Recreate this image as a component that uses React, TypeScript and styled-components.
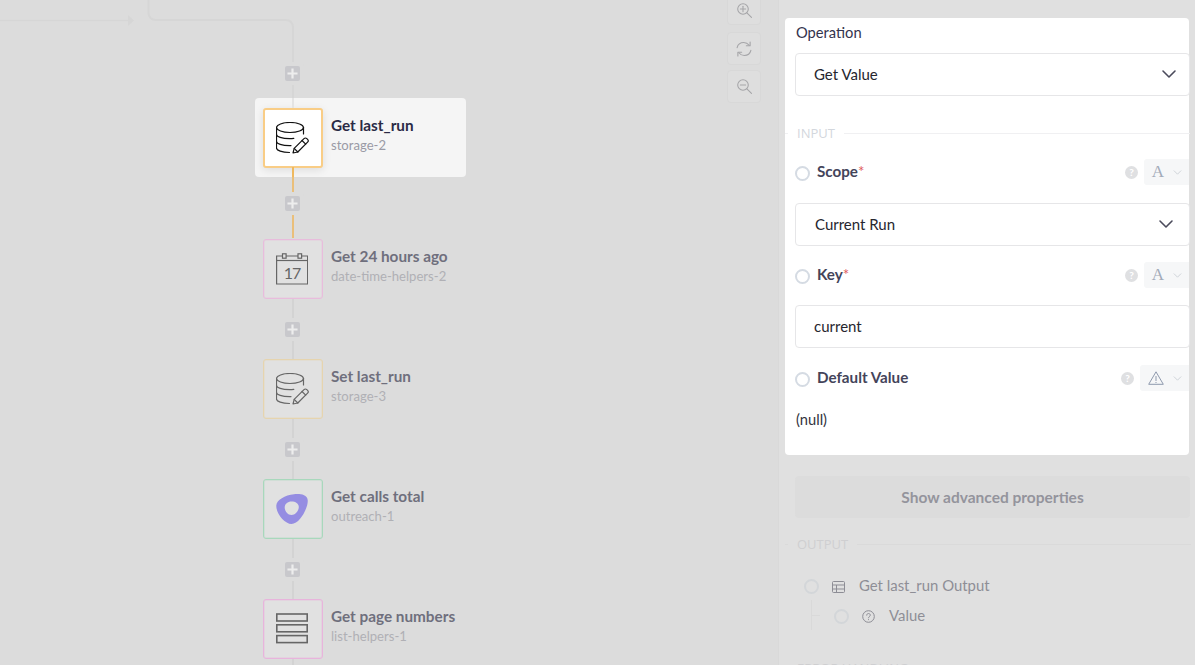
import React from "react";
import styled, { createGlobalStyle } from "styled-components";

const Global = createGlobalStyle`
  html, body { margin: 0; padding: 0; height: 100%; overflow: hidden; background: #dcdcdc; }
  #root { height: 100%; }
  * { box-sizing: border-box; }
`;

const Page = styled.div`
  display: flex;
  width: 1195px;
  height: 665px;
  overflow: hidden;
  font-family: "Lato", "Open Sans", sans-serif;
  background: #dcdcdc;
`;

const Canvas = styled.div`
  position: relative;
  width: 778px;
  flex: none;
  height: 100%;
  overflow: hidden;
`;

const Wires = styled.svg`
  position: absolute;
  inset: 0;
`;

const NodeWrap = styled.div<{ $x: number; $y: number; $selected?: boolean }>`
  position: absolute;
  left: ${(p) => p.$x}px;
  top: ${(p) => p.$y}px;
  width: 211px;
  height: 79px;
  display: flex;
  align-items: center;
  gap: 8px;
  padding-left: 8px;
  border-radius: 4px;
  background: ${(p) => (p.$selected ? "#f5f5f5" : "transparent")};
  ${(p) =>
    p.$selected
      ? `&::after {
    content: "";
    position: absolute;
    left: 37px;
    top: 69px;
    width: 2px;
    height: 10px;
    background: #efb95f;
  }
  &::before {
    content: "";
    position: absolute;
    left: 37px;
    top: 0;
    width: 2px;
    height: 10px;
    background: #e4e4e4;
  }`
      : ""}
`;

const IconBox = styled.div<{ $color: string; $selected?: boolean }>`
  width: 60px;
  height: 60px;
  flex: none;
  display: flex;
  align-items: center;
  justify-content: center;
  padding-right: 2px;
  border: ${(p) => (p.$selected ? 2 : 1)}px solid ${(p) => p.$color};
  border-radius: 3px;
  background: ${(p) => (p.$selected ? "#ffffff" : "#e1e1e1")};
  box-shadow: ${(p) =>
    p.$selected
      ? "0 2px 8px rgba(0,0,0,0.1)"
      : `inset 0 0 0 1px color-mix(in srgb, ${p.$color} 30%, transparent)`};
  color: ${(p) => (p.$selected ? "#111111" : "#666666")};
`;

const NodeText = styled.div`
  display: flex;
  flex-direction: column;
  gap: 3px;
  white-space: nowrap;
  padding-bottom: 5px;
`;

const NodeTitle = styled.div<{ $selected?: boolean }>`
  font-size: 15.3px;
  line-height: 18px;
  font-weight: 700;
  color: ${(p) => (p.$selected ? "#2a2a45" : "#6f6f7d")};
`;

const NodeSub = styled.div<{ $selected?: boolean }>`
  font-size: 13.1px;
  line-height: 17px;
  color: ${(p) => (p.$selected ? "#9a9aa5" : "#b0b0b5")};
`;

const Plus = styled.div<{ $y: number }>`
  position: absolute;
  left: 285px;
  top: ${(p) => p.$y}px;
  width: 15px;
  height: 15px;
  border-radius: 2px;
  background: #c8c8cc;
  box-shadow: 0 0 0 4px #dcdcdc;
  display: flex;
  align-items: center;
  justify-content: center;
`;

const ZoomBtn = styled.div<{ $y: number; $nudge?: number }>`
  position: absolute;
  left: 727px;
  top: ${(p) => p.$y}px;
  width: 34px;
  height: 33px;
  padding-top: ${(p) => p.$nudge ?? 0}px;
  border: 1px solid #d8d8d8;
  border-radius: 4px;
  background: #dedede;
  display: flex;
  align-items: center;
  justify-content: center;
  color: #a5a5a8;
`;

const Panel = styled.div`
  flex: 1;
  height: 100%;
  background: #e0e0e0;
  border-left: 1px solid #d9d9d9;
  padding: 18px 5px 0 6px;
  display: flex;
  flex-direction: column;
  overflow: hidden;
`;

const Card = styled.div`
  background: #ffffff;
  border-radius: 4px;
  height: 437px;
  padding: 5px 0 0 10px;
  margin-right: 1px;
  flex: none;
  display: flex;
  flex-direction: column;
`;

const FieldLabel = styled.div`
  margin-left: 1px;
  font-size: 14.7px;
  line-height: 18px;
  color: #33334d;
`;

const Control = styled.div<{ $pad?: number; $padRight?: number; $top?: number }>`
  height: 43px;
  margin-top: ${(p) => p.$top ?? 0}px;
  margin-right: -1px;
  border: 1px solid #e6e6e8;
  border-radius: 4px;
  padding: 0 ${(p) => p.$padRight ?? 12}px 2px ${(p) => p.$pad ?? 18}px;
  display: flex;
  align-items: center;
  justify-content: space-between;
  font-size: 15px;
  color: #26262e;
`;

const SectionRow = styled.div<{ $top: number; $line: string; $text: string }>`
  display: flex;
  align-items: center;
  gap: 9px;
  margin: ${(p) => p.$top}px -1px 0 -10px;
  font-family: "Open Sans", sans-serif;
  font-size: 13px;
  line-height: 16px;
  color: ${(p) => p.$text};
  white-space: nowrap;
  &::before {
    content: "";
    width: 3px;
    height: 1px;
    background: ${(p) => p.$line};
  }
  &::after {
    content: "";
    flex: 1;
    height: 1px;
    background: ${(p) => p.$line};
  }
`;

const PropRow = styled.div<{ $top: number }>`
  display: flex;
  align-items: center;
  margin-top: ${(p) => p.$top}px;
  height: 26px;
`;

const Radio = styled.span<{ $light?: boolean }>`
  width: 15px;
  height: 15px;
  flex: none;
  margin-top: 2px;
  border-radius: 50%;
  border: 2px solid ${(p) => (p.$light ? "#d3d6d9" : "#d5dbe3")};
`;

const PropName = styled.div`
  margin-left: 7px;
  font-size: 15.2px;
  font-weight: 700;
  color: #44445a;
  flex: 1;
  padding-bottom: 2px;
`;

const Req = styled.span`
  color: #e05a5a;
  font-weight: 400;
`;

const HelpDot = styled.span`
  width: 13px;
  height: 13px;
  border-radius: 50%;
  background: #dfe0e2;
  color: #fff;
  font-size: 10px;
  font-weight: 700;
  line-height: 13px;
  text-align: center;
  margin-right: 6px;
`;

const TypeBox = styled.div`
  height: 26px;
  padding: 0 7px 0 7px;
  background: #f6f7f8;
  border-radius: 3px 0 0 3px;
  display: flex;
  align-items: center;
  gap: 8px;
  color: #a3abb9;
`;

const TypeA = styled.span`
  font-family: "Liberation Serif", serif;
  font-size: 17px;
  width: 14px;
  text-align: center;
`;

const WarnSlot = styled.span`
  display: flex;
  margin: 0 1px;
  color: #8e99ad;
`;

const NullText = styled.div`
  margin: 19px 0 0 1px;
  font-size: 14.7px;
  line-height: 18px;
  color: #33333d;
`;

const AdvancedButton = styled.div`
  margin: 21px 0 0 10px;
  height: 42px;
  flex: none;
  border-radius: 4px;
  background: #dcdcdc;
  display: flex;
  align-items: center;
  justify-content: center;
  font-size: 15.5px;
  font-weight: 700;
  color: #94949c;
`;

const DimSection = styled.div`
  padding-left: 10px;
  flex: none;
`;

const TreeRow = styled.div<{ $indent: number; $top: number }>`
  position: relative;
  display: flex;
  align-items: center;
  margin: ${(p) => p.$top}px 0 0 ${(p) => p.$indent}px;
  height: 20px;
  font-size: 14.9px;
  color: #8e8e96;
`;

const TreeIcon = styled.span`
  display: flex;
  margin: 3px 14px 0 13px;
  color: #8d8d95;
`;

const TreeTick = styled.div`
  position: absolute;
  left: -23px;
  top: -5px;
  width: 8px;
  height: 30px;
  border-left: 1px solid #d9d9d9;
  &::after {
    content: "";
    position: absolute;
    left: 0;
    top: 15px;
    width: 8px;
    height: 1px;
    background: #d9d9d9;
  }
`;

const Chevron = ({ size = 16, color = "#4b4b5c" }: { size?: number; color?: string }) => (
  <svg width={size} height={size} viewBox="0 0 16 16" fill="none" stroke={color} strokeWidth={1.6} strokeLinecap="round" strokeLinejoin="round">
    <path d="M2 5l6 6 6-6" />
  </svg>
);

const DbEdit = () => (
  <svg width="33" height="32" viewBox="0 0 33 32" fill="none" stroke="currentColor" strokeWidth="1.2" strokeLinecap="round" strokeLinejoin="round">
    <ellipse cx="14" cy="5.500" rx="13.500" ry="5" />
    <path d="M0.500 5.500v20.500c0 2.400 5.500 4.500 13 4.500" />
    <path d="M27.500 5.500v6.500" />
    <path d="M0.500 12.500c0 2.200 5.500 4.200 13 4.200 1.500 0 3-.1 4.300-.3" />
    <path d="M0.500 19.500c0 2.200 5.500 4.200 13 4.200 0.500 0 1 0 1.500-.1" />
    <path d="M17 31l1.200-4.600L28 16.600c.8-.8 2-.8 2.800 0l.8.8c.8.8.8 2 0 2.800L21.800 30 17 31z" />
    <path d="M26 18.500l3.700 3.700" />
    <path d="M18.200 26.400l3.600 3.600" />
  </svg>
);

const Calendar = () => (
  <svg width="32" height="32" viewBox="0 0 32 32" fill="none" stroke="currentColor" strokeWidth="1.2">
    <path d="M0.600 3h31v28h-31z" />
    <path d="M0.600 7.500h31" />
    <rect x="6.500" y="0.800" width="3.600" height="4.400" fill="#e1e1e1" />
    <rect x="22" y="0.800" width="3.600" height="4.400" fill="#e1e1e1" />
    <text x="16" y="26" textAnchor="middle" fontFamily="Lato, sans-serif" fontSize="16" letterSpacing="-1" fill="currentColor" stroke="none">17</text>
  </svg>
);

const ListIcon = () => (
  <svg width="32" height="32" viewBox="0 0 32 32" fill="none" stroke="currentColor" strokeWidth="1.6">
    <rect x="0.800" y="1" width="30.400" height="7" />
    <rect x="0.800" y="11.800" width="30.400" height="7" />
    <rect x="0.800" y="22.600" width="30.400" height="7" />
  </svg>
);

const OutreachLogo = () => (
  <svg width="32" height="30" viewBox="0 0 32 30">
    <path
      fillRule="evenodd"
      fill="#958de2"
      d="M18 0.300C23-0.200 31 0 31.700 6 32.500 13 24 30 15.500 30 9 30 0 20 0.300 11.500 0.500 6 9 1.200 18 0.300zM15.500 7.500c4 0 7.300 2 7.300 5.500 0 3.800-3.500 8-7.300 8-3.800 0-6.800-4-6.800-7.500 0-3.500 3-6 6.800-6z"
    />
  </svg>
);

const PlusGlyph = () => (
  <svg width="11" height="11" viewBox="0 0 12 12" stroke="#ededed" strokeWidth="2.400">
    <path d="M6 0.500v11M0.500 6h11" />
  </svg>
);

const MagPlus = ({ minus }: { minus?: boolean }) => (
  <svg width="15" height="15" viewBox="0 0 17 17" fill="none" stroke="currentColor" strokeWidth="1.2" strokeLinecap="round">
    <circle cx="6.800" cy="6.800" r="6" />
    <path d="M11.200 11.200l5.200 5.200M3.800 6.800h6" />
    {!minus && <path d="M6.800 3.800v6" />}
  </svg>
);

const Refresh = () => (
  <svg width="16" height="16" viewBox="0 0 17 17" fill="none" stroke="currentColor" strokeWidth="1.2" strokeLinejoin="round" strokeLinecap="round">
    <path d="M1.200 7C2 3.600 4.900 1.600 8.200 1.600c2.400 0 4.300 1 5.800 2.900" />
    <path d="M15 1v4h-4" />
    <path d="M15.800 10c-.8 3.400-3.700 5.400-7 5.400-2.400 0-4.300-1-5.800-2.900" />
    <path d="M2 16v-4h4" />
  </svg>
);

const TableIcon = () => (
  <svg width="13" height="12" viewBox="0 0 13 12" fill="none" stroke="currentColor" strokeWidth="1">
    <rect x="0.500" y="0.500" width="12" height="11" rx="1" />
    <path d="M0.500 4h12M0.500 8h12M4.500 4v7.500" />
  </svg>
);

const QuestionIcon = () => (
  <svg width="13" height="13" viewBox="0 0 13 13" fill="none" stroke="currentColor" strokeWidth="1">
    <circle cx="6.500" cy="6.500" r="5.800" />
    <path d="M4.700 5.200c0-1 .8-1.700 1.800-1.700s1.800.7 1.800 1.600c0 1.400-1.800 1.400-1.800 2.700" strokeLinecap="round" />
    <path d="M6.500 9.200v.9" />
  </svg>
);

const Warn = () => (
  <svg width="16" height="14" viewBox="0 0 16 14" fill="none" stroke="currentColor" strokeWidth="1">
    <path d="M8 0.800L15.300 13.300H0.700L8 0.800z" strokeLinejoin="round" />
    <path d="M8 5v5M8 11v1" />
  </svg>
);

const nodes = [
  { y: 98, title: "Get last_run", sub: "storage-2", color: "#f9cd86", icon: <DbEdit />, selected: true },
  { y: 229, title: "Get 24 hours ago", sub: "date-time-helpers-2", color: "#e8bcdc", icon: <Calendar /> },
  { y: 349, title: "Set last_run", sub: "storage-3", color: "#e6d4ae", icon: <DbEdit /> },
  { y: 469, title: "Get calls total", sub: "outreach-1", color: "#a8d8bc", icon: <OutreachLogo /> },
  { y: 589, title: "Get page numbers", sub: "list-helpers-1", color: "#e8b4dc", icon: <ListIcon /> },
];

const pluses = [66, 196, 322, 442, 562];

export default function App() {
  return (
    <Page>
      <Global />
      <Canvas>
        <Wires width="778" height="665" fill="none">
          <path d="M0 20.500H128" stroke="#d6d6d6" strokeWidth="1.500" />
          <path d="M128 15l6 5.500-6 5.500z" fill="#d6d6d6" />
          <path d="M148.500 0v13a7 7 0 0 0 7 7H286a7 7 0 0 1 7 7V108" stroke="#d6d6d6" strokeWidth="2" />
          <path d="M293 168V238" stroke="#eabf7a" strokeWidth="2" />
          <path d="M293 298V665" stroke="#d3d3d3" strokeWidth="2" />
        </Wires>
        {nodes.map((n) => (
          <NodeWrap key={n.title} $x={255} $y={n.y} $selected={n.selected}>
            <IconBox $color={n.color} $selected={n.selected}>{n.icon}</IconBox>
            <NodeText>
              <NodeTitle $selected={n.selected}>{n.title}</NodeTitle>
              <NodeSub $selected={n.selected}>{n.sub}</NodeSub>
            </NodeText>
          </NodeWrap>
        ))}
        {pluses.map((y) => (
          <Plus key={y} $y={y}><PlusGlyph /></Plus>
        ))}
        <ZoomBtn $y={-8} $nudge={3}><MagPlus /></ZoomBtn>
        <ZoomBtn $y={32}><Refresh /></ZoomBtn>
        <ZoomBtn $y={70}><MagPlus minus /></ZoomBtn>
      </Canvas>
      <Panel>
        <Card>
          <FieldLabel>Operation</FieldLabel>
          <Control $top={12}>
            Get Value
            <Chevron />
          </Control>
          <SectionRow $top={29} $line="#f0f0f2" $text="#d3d7dd">INPUT</SectionRow>
          <PropRow $top={18}>
            <Radio />
            <PropName>Scope<Req>*</Req></PropName>
            <HelpDot>?</HelpDot>
            <TypeBox><TypeA>A</TypeA><Chevron size={9} color="#ccd0d6" /></TypeBox>
          </PropRow>
          <Control $pad={19} $padRight={15} $top={18}>
            Current Run
            <Chevron />
          </Control>
          <PropRow $top={16}>
            <Radio />
            <PropName>Key<Req>*</Req></PropName>
            <HelpDot>?</HelpDot>
            <TypeBox><TypeA>A</TypeA><Chevron size={9} color="#ccd0d6" /></TypeBox>
          </PropRow>
          <Control $top={17}>current</Control>
          <PropRow $top={17}>
            <Radio />
            <PropName>Default Value</PropName>
            <HelpDot>?</HelpDot>
            <TypeBox><WarnSlot><Warn /></WarnSlot><Chevron size={9} color="#ccd0d6" /></TypeBox>
          </PropRow>
          <NullText>(null)</NullText>
        </Card>
        <AdvancedButton>Show advanced properties</AdvancedButton>
        <DimSection>
          <SectionRow $top={18} $line="#dadada" $text="#cfcfd1">OUTPUT</SectionRow>
          <TreeRow $indent={9} $top={23}>
            <Radio $light />
            <TreeIcon><TableIcon /></TreeIcon>
            Get last_run Output
          </TreeRow>
          <TreeRow $indent={39} $top={10}>
            <TreeTick />
            <Radio $light />
            <TreeIcon><QuestionIcon /></TreeIcon>
            Value
          </TreeRow>
          <SectionRow $top={35} $line="#dadada" $text="#cfcfd1">ERROR HANDLING</SectionRow>
        </DimSection>
      </Panel>
    </Page>
  );
}
